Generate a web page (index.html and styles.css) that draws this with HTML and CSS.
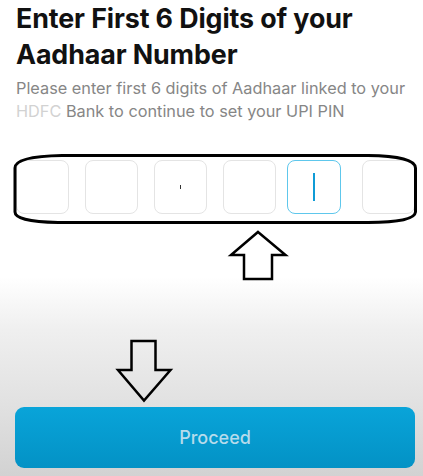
FILE: index.html
```html
<!DOCTYPE html>
<html lang="en">
<head>
    <meta charset="UTF-8">
    <meta name="viewport" content="width=device-width, initial-scale=1.0">
    <title>Set UPI PIN</title>
    <link rel="stylesheet" href="styles.css">
</head>
<body>
    <main class="screen">
        <section class="intro">
            <h1>Enter First 6 Digits of your Aadhaar Number</h1>
            <p>Please enter first 6 digits of Aadhaar linked to your <span class="faded">HDFC</span> Bank to continue to set your UPI PIN</p>
        </section>

        <div class="pin-row">
            <div class="pin-box"></div>
            <div class="pin-box"></div>
            <div class="pin-box"><span class="speck"></span></div>
            <div class="pin-box"></div>
            <div class="pin-box active"><span class="caret"></span></div>
            <div class="pin-box"></div>
        </div>

        <div class="footer">
            <button class="proceed">Proceed</button>
        </div>

        <!-- hand-drawn markers over the screen -->
        <svg class="marks" width="423" height="476" viewBox="0 0 423 476">
            <path d="M62 155.5 L368 155.5 C400 156 415 160 415.5 168 L415.5 212 C415 219 400 222 368 222.5 L58 222.5 C28 222 15 218 15 212 L15 168 C15 160 30 156 62 155.5 Z"
                  fill="none" stroke="#000" stroke-width="3"/>
            <path d="M258 232 L285.5 255 L272 255 L272 279 L244 279 L244 255 L231 255 Z"
                  fill="#fff" stroke="#000" stroke-width="2.5" stroke-linejoin="miter"/>
            <path d="M131.5 341 L155.5 341 L155.5 370 L170.5 370 L144 400.5 L118 370 L131.5 370 Z"
                  fill="none" stroke="#000" stroke-width="2.5" stroke-linejoin="miter"/>
        </svg>
    </main>
</body>
</html>
```

FILE: styles.css
```css
html, body {
    margin: 0;
    padding: 0;
}
body {
    font-family: Inter, "Noto Sans", sans-serif;
    background: linear-gradient(to bottom, #ffffff 0, #ffffff 277px, #efefef 330px, #e2e2e2 400px, #d2d2d2 100%);
    height: 100vh;
    overflow: hidden;
}
.screen {
    position: relative;
    height: 476px;
    display: flex;
    flex-direction: column;
    padding: 0 16px;
    box-sizing: border-box;
}
.intro {
    margin-right: -12px;
}
h1 {
    margin: 0;
    font-size: 26.8px;
    line-height: 36px;
    font-weight: 700;
    color: #111;
    letter-spacing: -0.1px;
}
.intro p {
    margin: 5px 0 0;
    font-size: 16.3px;
    line-height: 23px;
    color: #868686;
}
.faded {
    color: #d2d2d2;
}
.pin-row {
    display: flex;
    gap: 16px;
    margin-top: 37px;
}
.pin-box {
    flex: 0 0 auto;
    width: 53px;
    height: 54px;
    box-sizing: border-box;
    border: 1px solid #e4e4e4;
    border-radius: 8px;
    display: flex;
    align-items: center;
    justify-content: center;
}
.pin-box.active {
    margin: 0 5px 0 -5px;
    width: 54px;
    border: 1.5px solid #5ec7ec;
}
.caret {
    width: 2px;
    height: 28px;
    background: #0f9bd6;
}
.speck {
    width: 1px;
    height: 4px;
    background: #333;
}
.footer {
    margin-top: auto;
    margin-left: -1px;
    margin-right: -8px;
    padding-bottom: 8px;
}
.proceed {
    width: 100%;
    height: 61px;
    border: none;
    border-radius: 9px;
    background: linear-gradient(to bottom, #09a4d9, #0392c5);
    color: #b6dbeb;
    font-family: Inter, "Noto Sans", sans-serif;
    font-size: 18px;
    font-weight: 500;
}
.marks {
    position: absolute;
    left: 0;
    top: 0;
    pointer-events: none;
}
```
